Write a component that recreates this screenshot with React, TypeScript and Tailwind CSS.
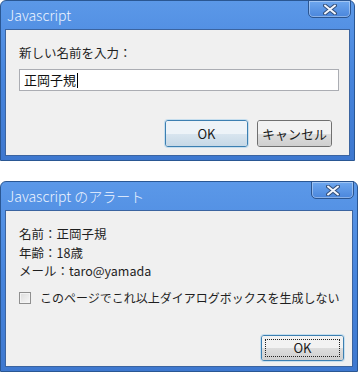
import React from "react";

const font = { fontFamily: '"Noto Sans CJK JP", "Noto Sans", sans-serif' };

function CloseButton() {
  return (
    <div className="absolute right-[3px] top-[-1px] flex h-[18px] w-[43px] items-center justify-center rounded-b-[5px] border border-[#2b5590] bg-gradient-to-b from-[#6ea7ef] to-[#4a86dc] shadow-[inset_0_0_0_1px_rgba(255,255,255,0.35)]">
      <svg width="14" height="11" viewBox="0 0 14 11">
        <path d="M2 1.5 L12 9.5 M12 1.5 L2 9.5" stroke="#35507a" strokeWidth="4" strokeLinecap="round" />
        <path d="M2 1.5 L12 9.5 M12 1.5 L2 9.5" stroke="#f4f8ff" strokeWidth="2" strokeLinecap="round" />
      </svg>
    </div>
  );
}

function Window({ title, className, children }: { title: string; className: string; children: React.ReactNode }) {
  return (
    <div className={`relative flex flex-col rounded-t-[6px] border border-[#2a5793] bg-gradient-to-b from-[#5b98e8] via-[#4684dc] to-[#3e78cf] ${className}`}>
      <CloseButton />
      <div className="flex h-[28px] shrink-0 items-center pl-[6px] text-[14px] font-light text-[#eef4ff]" style={font}>
        {title}
      </div>
      <div className="mx-[4px] mb-[4px] flex flex-1 flex-col border border-[#3b64a0] bg-[#f0f0f0]">{children}</div>
    </div>
  );
}

function Button({ label, variant }: { label: string; variant: "default" | "plain" | "focus" }) {
  const border =
    variant === "plain"
      ? "border-[#707070]"
      : "border-[#3c7fb1] shadow-[0_0_0_1px_rgba(120,190,235,0.35)]";
  const top = variant === "default" ? "bg-[#edf3f8]" : "bg-[#f2f2f2]";
  const bottom =
    variant === "default"
      ? "bg-gradient-to-b from-[#d8e5ef] to-[#c6d8e6]"
      : "bg-gradient-to-b from-[#dddddd] to-[#cfcfcf]";
  return (
    <div className={`relative flex h-full items-center justify-center rounded-[3px] border ${border} text-[13px] text-[#1a1a1a]`} style={font}>
      <div className="absolute inset-0 flex flex-col overflow-hidden rounded-[2px]">
        <div className={`flex-1 ${top}`} />
        <div className={`flex-1 ${bottom}`} />
      </div>
      {variant === "focus" && <div className="absolute inset-[3px] border border-dotted border-[#222]" />}
      <span className="relative">{label}</span>
    </div>
  );
}

export default function App() {
  return (
    <div className="flex h-[377px] w-[360px] flex-col bg-white">
      <Window title="Javascript" className="h-[161px] w-[355px]">
        <div className="flex flex-1 flex-col px-[13px] pt-[14px]">
          <div className="text-[12.5px] leading-[18px] text-[#1e1e1e]" style={font}>
            新しい名前を入力：
          </div>
          <div className="mt-[7px] flex h-[22px] w-[320px] items-center border border-[#abadb3] bg-white pl-[4px] text-[13px] text-[#111]" style={font}>
            正岡子規
            <span className="ml-[1px] h-[15px] w-px bg-black" />
          </div>
          <div className="mt-[29px] flex h-[27px] justify-end gap-[9px] pr-[4px]">
            <div className="w-[83px]">
              <Button label="OK" variant="default" />
            </div>
            <div className="w-[75px]">
              <Button label="キャンセル" variant="plain" />
            </div>
          </div>
        </div>
      </Window>

      <div className="h-[20px]" />

      <Window title="Javascript のアラート" className="h-[191px] w-[358px]">
        <div className="flex flex-1 flex-col pl-[13px] pr-[8px] pt-[14px]">
          <div className="flex flex-col text-[12.5px] leading-[18.5px] text-[#1e1e1e]" style={font}>
            <span>名前：正岡子規</span>
            <span>年齢：18歳</span>
            <span>メール：taro@yamada</span>
          </div>
          <div className="mt-[8px] flex items-center gap-[9px]">
            <div className="h-[12px] w-[12px] border border-[#8f8f8f] bg-gradient-to-br from-[#dcdcdc] to-[#f8f8f8] shadow-[inset_0_0_0_1px_#f4f4f4]" />
            <span className="text-[12px] leading-[18px] text-[#1e1e1e]" style={font}>
              このページでこれ以上ダイアログボックスを生成しない
            </span>
          </div>
          <div className="mt-auto mb-[5px] flex h-[26px] justify-end">
            <div className="w-[83px]">
              <Button label="OK" variant="focus" />
            </div>
          </div>
        </div>
      </Window>
    </div>
  );
}
